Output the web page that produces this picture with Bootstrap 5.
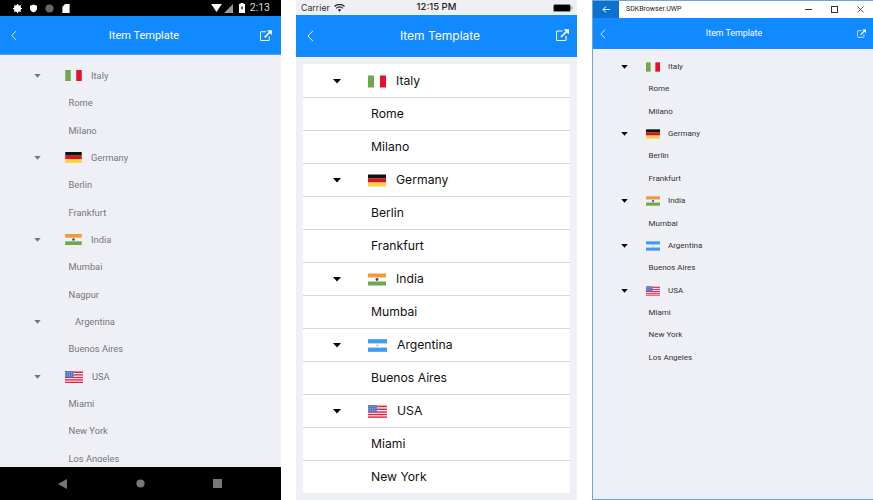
<!DOCTYPE html>
<html lang="en">
<head>
<meta charset="UTF-8">
<title>Item Template</title>
<link href="https://cdn.jsdelivr.net/npm/bootstrap@5.3.0/dist/css/bootstrap.min.css" rel="stylesheet">
<style>
  html, body { background: #fff; overflow: hidden; }
  .shots { width: 873px; height: 500px; gap: 15px; }
  .phone { width: 281px; height: 500px; background: #eff0f5; flex: none; }
  .app-bar { background: #1189ff; color: #fff; flex: none; position: relative; }
  .app-title { position: absolute; left: 0; right: 0; text-align: center; }

  /* android */
  .droid { font-family: Roboto, "Liberation Sans", sans-serif; }
  .droid .status-top { height: 16px; background: #000; color: #ddd; font-size: 10.5px; padding: 0 11px 0 13px; }
  .droid .sig-cell { margin-left: 2px; }
  .droid .sig-batt { margin-left: 6px; }
  .droid .sig-time { margin-left: 5px; }
  .droid .app-bar { height: 39px; padding: 0 9px 0 11px; border-bottom: 1px solid #4aa5ff; }
  .droid .app-title { font-size: 11px; padding: 2px 0 0 7px; }
  .droid .tree { flex: 1 1 0; padding-top: 7.2px; margin-bottom: 5.5px; overflow: hidden; color: #76767a; font-size: 9.3px; }
  .droid .tree-row { height: 27.35px; }
  .droid .caret-cell { width: 65px; padding-left: 34px; color: #76767a; }
  .droid .flag-cell { margin-right: 9px; }
  .droid .child { padding-left: 68.5px; }
  .droid .no-flag { padding-left: 10px; }
  .droid .nav-keys { height: 33px; background: #000; flex: none; padding: 0 59px 0 58px; }

  /* ios */
  .apple { font-family: Inter, "Liberation Sans", sans-serif; }
  .apple .status-top { height: 15px; color: #333; font-size: 8.8px; position: relative; padding: 0 4px 0 5px; }
  .apple .clock { position: absolute; left: 0; right: 0; text-align: center; font-weight: 500; font-size: 9.5px; color: #222; }
  .apple .app-bar { height: 42px; padding: 0 8px 0 11px; }
  .apple .app-title { font-size: 12px; padding-left: 7px; }
  .apple .bar-share { top: -1px; }
  .apple .tree { margin: 7px 7px 0; padding-top: 1px; background: #fff; }
  .apple .tree-item { height: 33px; padding: 0; font-size: 12.2px; color: #111; border-color: #d8d8da; background: #fff; }
  .apple .tree-item:last-child { height: 32px; }
  .apple .caret-cell { width: 65px; padding-left: 30px; color: #000; }
  .apple .flag-cell { margin-right: 10px; }
  .apple .child { padding-left: 68px; padding-top: 1px; }

  /* uwp */
  .win { font-family: Roboto, "Liberation Sans", sans-serif; border: 1px solid #6ca6d9; border-right: 0; }
  .win .title-strip { height: 17px; background: #fff; color: #222; font-size: 7px; }
  .win .back-tile { width: 26px; height: 17px; background: #0a72d1; }
  .win .strip-name { padding-left: 7px; }
  .win .strip-btn { width: 26px; }
  .win .app-bar { height: 31px; padding: 0 7px 0 7px; }
  .win .app-title { font-size: 8.8px; padding: 1px 0 0 2px; }
  .win .tree { flex: 1 1 0; padding-top: 6.6px; color: #333; font-size: 8px; }
  .win .tree-row { height: 22.4px; }
  .win .caret-cell { width: 53px; padding-left: 28px; color: #000; }
  .win .flag-cell { margin-right: 8px; }
  .win .child { padding-left: 55.5px; }
</style>
</head>
<body>

<svg width="0" height="0" class="position-absolute">
  <symbol id="fl-it" viewBox="0 0 18 12">
    <rect width="6" height="12" fill="#6fa84a"/><rect x="12" width="6" height="12" fill="#e8112d"/>
  </symbol>
  <symbol id="fl-de" viewBox="0 0 18 12">
    <rect width="18" height="4" fill="#111"/><rect y="4" width="18" height="4" fill="#d8141c"/><rect y="8" width="18" height="4" fill="#fdd046"/>
  </symbol>
  <symbol id="fl-in" viewBox="0 0 18 12">
    <rect width="18" height="4" fill="#f49a32"/><rect y="8" width="18" height="4" fill="#6fa84a"/><circle cx="9" cy="6" r="1.400" fill="#2b4fa8"/>
  </symbol>
  <symbol id="fl-ar" viewBox="0 0 18 12">
    <rect width="18" height="4" fill="#3f9bf5"/><rect y="8" width="18" height="4" fill="#3f9bf5"/><circle cx="9" cy="6" r="1.200" fill="#f6cf5a"/>
  </symbol>
  <symbol id="fl-us" viewBox="0 0 18 12">
    <rect width="18" height="12" fill="#fff"/>
    <rect width="18" height="1.600" y=".4" fill="#e3254a"/><rect width="18" height="1.400" y="3.200" fill="#e3254a"/><rect width="18" height="1.400" y="5.800" fill="#e3254a"/><rect width="18" height="1.400" y="8.200" fill="#e3254a"/><rect width="18" height="1.400" y="10.600" fill="#e3254a"/>
    <rect width="8.500" height="6.400" fill="#5474c4"/>
    <path d="M0 1.500h8.500M0 3.200h8.500M0 4.900h8.500" stroke="#a9bbe8" stroke-width=".7" stroke-dasharray="1 1"/>
  </symbol>
  <symbol id="ic-caret" viewBox="0 0 8 5"><path d="M0 0h8L4 4.600z" fill="currentColor"/></symbol>
  <symbol id="ic-back" viewBox="0 0 8 14"><path d="M6.800 1 1 7l5.800 6" fill="none" stroke="#fff" stroke-width="1.100"/></symbol>
  <symbol id="ic-share" viewBox="0 0 13 12">
    <path d="M6.500 2H1.500a1 1 0 0 0-1 1v7.500a1 1 0 0 0 1 1H9a1 1 0 0 0 1-1V7" fill="none" stroke="#fff" stroke-width="1.100"/>
    <path d="M5 8l6-6" fill="none" stroke="#fff" stroke-width="1.700"/>
    <path d="M7.500 .2H13v5.300z" fill="#fff"/>
  </symbol>
</svg>

<div class="shots d-flex">

  <!-- Android -->
  <div class="phone droid d-flex flex-column">
    <div class="status-top d-flex align-items-center justify-content-between">
      <div class="d-flex align-items-center gap-2">
        <svg width="9" height="9" viewBox="0 0 10 10"><circle cx="5" cy="5" r="3" fill="none" stroke="#fff" stroke-width="2"/><path d="M5 0v10M0 5h10M1.500 1.500l7 7M8.500 1.500l-7 7" stroke="#fff" stroke-width="1.300"/></svg>
        <svg width="7" height="9" viewBox="0 0 9 10"><path d="M4.500 0 9 1.500V5c0 2.500-2 4-4.500 5C2 9 0 7.500 0 5V1.500z" fill="#fff"/></svg>
        <svg width="9" height="9" viewBox="0 0 10 10"><circle cx="5" cy="5" r="4.500" fill="#666"/></svg>
        <svg width="8" height="9" viewBox="0 0 8 10"><path d="M3 0h5v10H0V3z" fill="#fff"/></svg>
      </div>
      <div class="d-flex align-items-center">
        <svg width="11" height="8" viewBox="0 0 12 9"><path d="M0 0h12L6 9z" fill="#fff"/></svg>
        <svg class="sig-cell" width="9" height="9" viewBox="0 0 9 9"><path d="M9 0v9H0z" fill="#999"/></svg>
        <svg class="sig-batt" width="6" height="10" viewBox="0 0 6 10"><path d="M1.500 0h3v1H6v9H0V1h1.500z" fill="#fff"/><path d="M3.300 2.500 1.800 5.500h1l-.2 2 1.600-3h-1z" fill="#000"/></svg>
        <span class="sig-time">2:13</span>
      </div>
    </div>
    <div class="app-bar d-flex align-items-center justify-content-between">
      <svg width="6" height="11" class="position-relative"><use href="#ic-back"/></svg>
      <span class="app-title">Item Template</span>
      <svg width="12" height="11" class="position-relative"><use href="#ic-share"/></svg>
    </div>
    <div class="tree">
      <div class="tree-row d-flex align-items-center"><span class="caret-cell d-flex"><svg width="7" height="4"><use href="#ic-caret"/></svg></span><span class="flag-cell d-flex"><svg width="17" height="11"><use href="#fl-it"/></svg></span><span>Italy</span></div>
      <div class="tree-row child d-flex align-items-center">Rome</div>
      <div class="tree-row child d-flex align-items-center">Milano</div>
      <div class="tree-row d-flex align-items-center"><span class="caret-cell d-flex"><svg width="7" height="4"><use href="#ic-caret"/></svg></span><span class="flag-cell d-flex"><svg width="17" height="11"><use href="#fl-de"/></svg></span><span>Germany</span></div>
      <div class="tree-row child d-flex align-items-center">Berlin</div>
      <div class="tree-row child d-flex align-items-center">Frankfurt</div>
      <div class="tree-row d-flex align-items-center"><span class="caret-cell d-flex"><svg width="7" height="4"><use href="#ic-caret"/></svg></span><span class="flag-cell d-flex"><svg width="17" height="11"><use href="#fl-in"/></svg></span><span>India</span></div>
      <div class="tree-row child d-flex align-items-center">Mumbai</div>
      <div class="tree-row child d-flex align-items-center">Nagpur</div>
      <div class="tree-row d-flex align-items-center"><span class="caret-cell d-flex"><svg width="7" height="4"><use href="#ic-caret"/></svg></span><span class="no-flag">Argentina</span></div>
      <div class="tree-row child d-flex align-items-center">Buenos Aires</div>
      <div class="tree-row d-flex align-items-center"><span class="caret-cell d-flex"><svg width="7" height="4"><use href="#ic-caret"/></svg></span><span class="flag-cell d-flex"><svg width="18" height="12"><use href="#fl-us"/></svg></span><span>USA</span></div>
      <div class="tree-row child d-flex align-items-center">Miami</div>
      <div class="tree-row child d-flex align-items-center">New York</div>
      <div class="tree-row child d-flex align-items-center">Los Angeles</div>
    </div>
    <div class="nav-keys d-flex align-items-center justify-content-between">
      <svg width="9" height="10" viewBox="0 0 9 10"><path d="M9 0v10L0 5z" fill="#777"/></svg>
      <svg width="9" height="9" viewBox="0 0 10 10"><circle cx="5" cy="5" r="4.500" fill="#777"/></svg>
      <svg width="9" height="9" viewBox="0 0 9 9"><rect width="9" height="9" fill="#777"/></svg>
    </div>
  </div>

  <!-- iOS -->
  <div class="phone apple d-flex flex-column">
    <div class="status-top d-flex align-items-center justify-content-between">
      <span class="clock">12:15 PM</span>
      <div class="d-flex align-items-center position-relative">
        <span>Carrier</span>
        <svg class="ms-1" width="11" height="8" viewBox="0 0 11 8"><path d="M.5 2.500a7 7 0 0 1 10 0M2.200 4.300a4.600 4.600 0 0 1 6.600 0" fill="none" stroke="#222" stroke-width="1.200"/><path d="M3.800 5.800a2.400 2.400 0 0 1 3.400 0L5.500 7.800z" fill="#222"/></svg>
      </div>
      <svg class="position-relative" width="20" height="8" viewBox="0 0 20 8"><rect x=".5" y=".5" width="17" height="7" rx="1.500" fill="#000" stroke="#888"/><rect x="18.500" y="2.500" width="1" height="3" fill="#888"/></svg>
    </div>
    <div class="app-bar d-flex align-items-center justify-content-between">
      <svg width="7" height="12" class="position-relative"><use href="#ic-back"/></svg>
      <span class="app-title">Item Template</span>
      <svg width="13" height="12" class="position-relative bar-share"><use href="#ic-share"/></svg>
    </div>
    <div class="tree list-group list-group-flush">
      <div class="tree-item list-group-item d-flex align-items-center"><span class="caret-cell d-flex"><svg width="8" height="5"><use href="#ic-caret"/></svg></span><span class="flag-cell d-flex"><svg width="18" height="13"><use href="#fl-it"/></svg></span><span>Italy</span></div>
      <div class="tree-item child list-group-item d-flex align-items-center">Rome</div>
      <div class="tree-item child list-group-item d-flex align-items-center">Milano</div>
      <div class="tree-item list-group-item d-flex align-items-center"><span class="caret-cell d-flex"><svg width="8" height="5"><use href="#ic-caret"/></svg></span><span class="flag-cell d-flex"><svg width="18" height="13"><use href="#fl-de"/></svg></span><span>Germany</span></div>
      <div class="tree-item child list-group-item d-flex align-items-center">Berlin</div>
      <div class="tree-item child list-group-item d-flex align-items-center">Frankfurt</div>
      <div class="tree-item list-group-item d-flex align-items-center"><span class="caret-cell d-flex"><svg width="8" height="5"><use href="#ic-caret"/></svg></span><span class="flag-cell d-flex"><svg width="18" height="13"><use href="#fl-in"/></svg></span><span>India</span></div>
      <div class="tree-item child list-group-item d-flex align-items-center">Mumbai</div>
      <div class="tree-item list-group-item d-flex align-items-center"><span class="caret-cell d-flex"><svg width="8" height="5"><use href="#ic-caret"/></svg></span><span class="flag-cell d-flex"><svg width="19" height="13"><use href="#fl-ar"/></svg></span><span>Argentina</span></div>
      <div class="tree-item child list-group-item d-flex align-items-center">Buenos Aires</div>
      <div class="tree-item list-group-item d-flex align-items-center"><span class="caret-cell d-flex"><svg width="8" height="5"><use href="#ic-caret"/></svg></span><span class="flag-cell d-flex"><svg width="19" height="13"><use href="#fl-us"/></svg></span><span>USA</span></div>
      <div class="tree-item child list-group-item d-flex align-items-center">Miami</div>
      <div class="tree-item child list-group-item d-flex align-items-center">New York</div>
    </div>
  </div>

  <!-- UWP -->
  <div class="phone win d-flex flex-column">
    <div class="title-strip d-flex align-items-center">
      <span class="back-tile d-flex align-items-center justify-content-center">
        <svg width="8" height="7" viewBox="0 0 8 7"><path d="M8 3.500H1M4 .5l-3 3 3 3" fill="none" stroke="#fff"/></svg>
      </span>
      <span class="strip-name flex-grow-1">SDKBrowser.UWP</span>
      <span class="strip-btn d-flex justify-content-center"><svg width="7" height="7" viewBox="0 0 7 7"><path d="M0 3.500h7" stroke="#333"/></svg></span>
      <span class="strip-btn d-flex justify-content-center"><svg width="7" height="7" viewBox="0 0 7 7"><rect x=".5" y=".5" width="6" height="6" fill="none" stroke="#333"/></svg></span>
      <span class="strip-btn d-flex justify-content-center"><svg width="7" height="7" viewBox="0 0 7 7"><path d="M.5.500l6 6M6.500.500l-6 6" stroke="#333" stroke-width=".8"/></svg></span>
    </div>
    <div class="app-bar d-flex align-items-center justify-content-between">
      <svg width="6" height="10" class="position-relative"><use href="#ic-back"/></svg>
      <span class="app-title">Item Template</span>
      <svg width="9" height="9" class="position-relative"><use href="#ic-share"/></svg>
    </div>
    <div class="tree">
      <div class="tree-row d-flex align-items-center"><span class="caret-cell d-flex"><svg width="7" height="4"><use href="#ic-caret"/></svg></span><span class="flag-cell d-flex"><svg width="14" height="10"><use href="#fl-it"/></svg></span><span>Italy</span></div>
      <div class="tree-row child d-flex align-items-center">Rome</div>
      <div class="tree-row child d-flex align-items-center">Milano</div>
      <div class="tree-row d-flex align-items-center"><span class="caret-cell d-flex"><svg width="7" height="4"><use href="#ic-caret"/></svg></span><span class="flag-cell d-flex"><svg width="14" height="10"><use href="#fl-de"/></svg></span><span>Germany</span></div>
      <div class="tree-row child d-flex align-items-center">Berlin</div>
      <div class="tree-row child d-flex align-items-center">Frankfurt</div>
      <div class="tree-row d-flex align-items-center"><span class="caret-cell d-flex"><svg width="7" height="4"><use href="#ic-caret"/></svg></span><span class="flag-cell d-flex"><svg width="14" height="10"><use href="#fl-in"/></svg></span><span>India</span></div>
      <div class="tree-row child d-flex align-items-center">Mumbai</div>
      <div class="tree-row d-flex align-items-center"><span class="caret-cell d-flex"><svg width="7" height="4"><use href="#ic-caret"/></svg></span><span class="flag-cell d-flex"><svg width="14" height="10"><use href="#fl-ar"/></svg></span><span>Argentina</span></div>
      <div class="tree-row child d-flex align-items-center">Buenos Aires</div>
      <div class="tree-row d-flex align-items-center"><span class="caret-cell d-flex"><svg width="7" height="4"><use href="#ic-caret"/></svg></span><span class="flag-cell d-flex"><svg width="14" height="10"><use href="#fl-us"/></svg></span><span>USA</span></div>
      <div class="tree-row child d-flex align-items-center">Miami</div>
      <div class="tree-row child d-flex align-items-center">New York</div>
      <div class="tree-row child d-flex align-items-center">Los Angeles</div>
    </div>
  </div>

</div>

<script src="https://cdn.jsdelivr.net/npm/bootstrap@5.3.0/dist/js/bootstrap.bundle.min.js"></script>
</body>
</html>
